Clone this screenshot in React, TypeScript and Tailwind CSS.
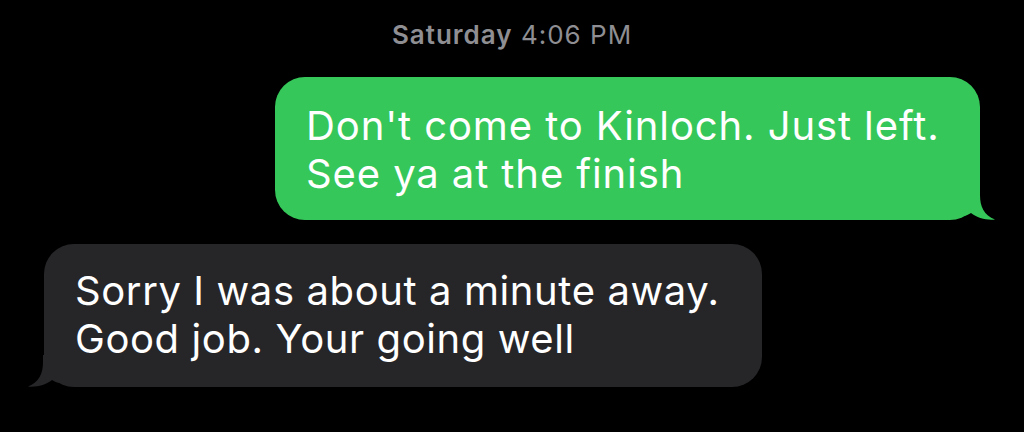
import React from "react";

function GreenTail() {
  return (
    <svg
      className="absolute right-[-15px] bottom-0"
      width="40"
      height="32"
      viewBox="0 0 40 32"
    >
      <path
        d="M8 0 L25 0 L25 7 C25 19 29 27 40 31.5 C32 32.5 22 30 16 25 C13 27 10 28 8 28 Z"
        fill="#35C759"
      />
    </svg>
  );
}

function GrayTail() {
  return (
    <svg
      className="absolute left-[-16px] bottom-0"
      width="40"
      height="32"
      viewBox="0 0 40 32"
      style={{ transform: "scaleX(-1)" }}
    >
      <path
        d="M8 0 L25 0 L25 7 C25 19 29 27 40 31.5 C32 32.5 22 30 16 25 C13 27 10 28 8 28 Z"
        fill="#262629"
      />
    </svg>
  );
}

export default function App() {
  return (
    <div
      className="w-[1024px] h-[432px] bg-black overflow-hidden flex flex-col"
      style={{ fontFamily: "Inter, 'Liberation Sans', sans-serif" }}
    >
      <div className="pt-[19px] text-center text-[26px] leading-[31px] tracking-[1px] text-[#8E8E93]">
        <span className="font-semibold">Saturday</span>
        <span> 4:06 PM</span>
      </div>
      <div className="flex justify-end pr-[44px] mt-[27px]">
        <div className="relative w-[705px] rounded-[30px] bg-[#35C759] pl-[31px] pt-[25px] pb-[22px] text-white text-[40px] leading-[48px] tracking-[0.9px]">
          <GreenTail />
          <div className="relative">
            Don't come to Kinloch. Just left.
            <br />
            See ya at the finish
          </div>
        </div>
      </div>
      <div className="flex justify-start pl-[44px] mt-[24px]">
        <div className="relative w-[718px] rounded-[30px] bg-[#262629] pl-[31px] pt-[23px] pb-[24px] text-white text-[40px] leading-[48px] tracking-[0.6px]">
          <GrayTail />
          <div className="relative">
            Sorry I was about a minute away.
            <br />
            Good job. Your going well
          </div>
        </div>
      </div>
    </div>
  );
}
